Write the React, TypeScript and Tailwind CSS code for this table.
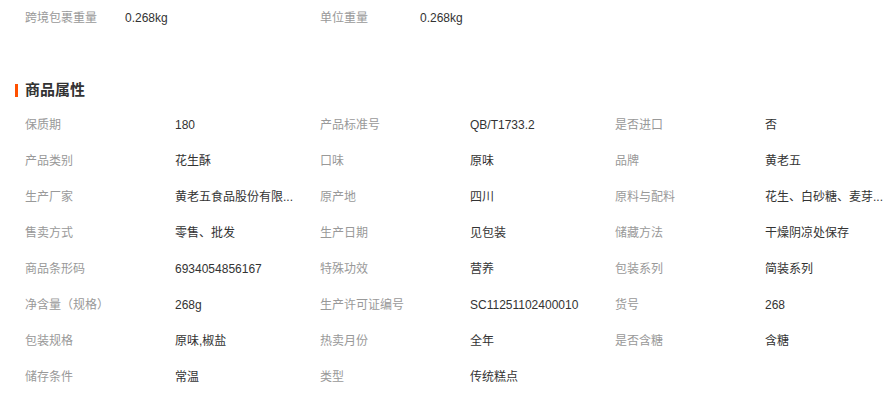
import React from 'react';

const topRows = [
  { label: '跨境包裹重量', value: '0.268kg' },
  { label: '单位重量', value: '0.268kg' },
];

// long values are shown already shortened, as on the page
const attrs = [
  ['保质期', '180'],
  ['产品标准号', 'QB/T1733.2'],
  ['是否进口', '否'],
  ['产品类别', '花生酥'],
  ['口味', '原味'],
  ['品牌', '黄老五'],
  ['生产厂家', '黄老五食品股份有限...'],
  ['原产地', '四川'],
  ['原料与配料', '花生、白砂糖、麦芽...'],
  ['售卖方式', '零售、批发'],
  ['生产日期', '见包装'],
  ['储藏方法', '干燥阴凉处保存'],
  ['商品条形码', '6934054856167'],
  ['特殊功效', '营养'],
  ['包装系列', '简装系列'],
  ['净含量（规格）', '268g'],
  ['生产许可证编号', 'SC11251102400010'],
  ['货号', '268'],
  ['包装规格', '原味,椒盐'],
  ['热卖月份', '全年'],
  ['是否含糖', '含糖'],
  ['储存条件', '常温'],
  ['类型', '传统糕点'],
];

export default function App() {
  return (
    <div
      className="w-[890px] h-[397px] bg-white overflow-hidden text-[12px]"
      style={{ fontFamily: '"Liberation Sans", "Noto Sans CJK SC", sans-serif' }}
    >
      <div className="flex pl-[25px] h-[36px] items-center">
        {topRows.map((r) => (
          <div key={r.label} className="flex w-[295px]">
            <span className="w-[100px] text-[#999]">{r.label}</span>
            <span className="text-[#333]">{r.value}</span>
          </div>
        ))}
      </div>

      <div className="mt-[42px] flex items-center h-[24px] pl-[15px]">
        <span className="w-[3px] h-[13px] bg-[#ff5000]" />
        <h3 className="ml-[7px] text-[15px] font-bold text-[#333]">商品属性</h3>
      </div>

      <div className="mt-[5px] pl-[25px] grid grid-cols-[295px_295px_275px]">
        {attrs.map(([label, value]) => (
          <div key={label} className="flex items-center h-[36px]">
            <span className="w-[150px] shrink-0 text-[#999]">{label}</span>
            <span className="whitespace-nowrap text-[#333]">{value}</span>
          </div>
        ))}
      </div>
    </div>
  );
}
